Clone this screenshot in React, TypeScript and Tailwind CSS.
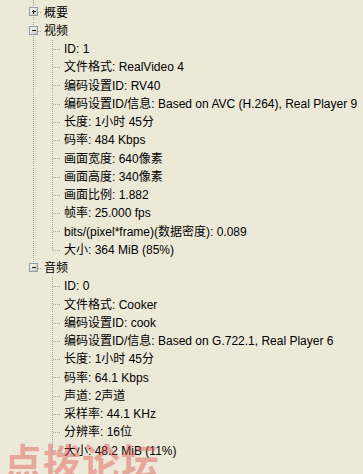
import React from 'react'

type Node = { label: string; open: boolean; children: string[] }

const ROW_H = 18.25

const tree: Node[] = [
  { label: '概要', open: false, children: [] },
  {
    label: '视频',
    open: true,
    children: [
      'ID: 1',
      '文件格式: RealVideo 4',
      '编码设置ID: RV40',
      '编码设置ID/信息: Based on AVC (H.264), Real Player 9',
      '长度: 1小时 45分',
      '码率: 484 Kbps',
      '画面宽度: 640像素',
      '画面高度: 340像素',
      '画面比例: 1.882',
      '帧率: 25.000 fps',
      'bits/(pixel*frame)(数据密度): 0.089',
      '大小: 364 MiB (85%)',
    ],
  },
  {
    label: '音频',
    open: true,
    children: [
      'ID: 0',
      '文件格式: Cooker',
      '编码设置ID: cook',
      '编码设置ID/信息: Based on G.722.1, Real Player 6',
      '长度: 1小时 45分',
      '码率: 64.1 Kbps',
      '声道: 2声道',
      '采样率: 44.1 KHz',
      '分辨率: 16位',
      '大小: 48.2 MiB (11%)',
    ],
  },
]

const DOT = '#a3a3a3'

// 展开/折叠按钮 + 根级连线
function RootConnector({ last, open }: { last: boolean; open: boolean }) {
  const mid = ROW_H / 2
  return (
    <svg width={19} height={ROW_H} className="shrink-0" shapeRendering="crispEdges">
      <line x1={9.5} y1={0} x2={9.5} y2={last ? mid : ROW_H} stroke={DOT} strokeDasharray="1 1" />
      <line x1={14} y1={mid} x2={18} y2={mid} stroke={DOT} strokeDasharray="1 1" />
      <defs>
        <linearGradient id="box" x1="0" y1="0" x2="1" y2="1">
          <stop offset="0" stopColor="#ffffff" />
          <stop offset="1" stopColor="#c8c4b4" />
        </linearGradient>
      </defs>
      <rect x={5.5} y={4.5} width={8} height={8} fill="url(#box)" stroke="#8c9cac" />
      <line x1={7.5} y1={8.5} x2={12} y2={8.5} stroke="#1a1a1a" />
      {!open && <line x1={9.5} y1={6.5} x2={9.5} y2={11} stroke="#1a1a1a" />}
    </svg>
  )
}

function PassLine({ show }: { show: boolean }) {
  return (
    <svg width={19} height={ROW_H} className="shrink-0" shapeRendering="crispEdges">
      {show && <line x1={9.5} y1={0} x2={9.5} y2={ROW_H} stroke={DOT} strokeDasharray="1 1" />}
    </svg>
  )
}

function ChildConnector({ last }: { last: boolean }) {
  const mid = Math.round(ROW_H / 2) + 0.5
  return (
    <svg width={20} height={ROW_H} className="shrink-0" shapeRendering="crispEdges">
      <line x1={9.5} y1={0} x2={9.5} y2={last ? mid : ROW_H} stroke={DOT} strokeDasharray="1 1" />
      <line x1={10} y1={mid} x2={18} y2={mid} stroke={DOT} strokeDasharray="1 1" />
    </svg>
  )
}

export default function App() {
  return (
    <div
      className="relative w-[363px] h-[474px] overflow-hidden bg-[#ece9d8] text-[12px] text-black"
      style={{ fontFamily: '"Liberation Sans", "Noto Sans CJK SC", sans-serif' }}
    >
      <div className="pl-[24px]">
        {/* 顶部延伸的根连线 */}
        <svg width={19} height={3.4} className="block" shapeRendering="crispEdges">
          <line x1={9.5} y1={0} x2={9.5} y2={4} stroke={DOT} strokeDasharray="1 1" />
        </svg>
        {tree.map((node, i) => {
          const lastRoot = i === tree.length - 1
          return (
            <div key={node.label}>
              <div className="flex items-center h-[18.25px]">
                <RootConnector last={lastRoot} open={node.open} />
                <span className="ml-[1px] whitespace-nowrap leading-none">{node.label}</span>
              </div>
              {node.open &&
                node.children.map((c, j) => (
                  <div key={c} className="flex items-center h-[18.25px]">
                    <PassLine show={!lastRoot} />
                    <ChildConnector last={j === node.children.length - 1} />
                    <span className="ml-[1px] whitespace-nowrap leading-none">{c}</span>
                  </div>
                ))}
            </div>
          )
        })}
      </div>

      {/* 水印 */}
      <div
        className="absolute left-[4px] top-[441px] text-[38px] font-bold tracking-[1px] text-[#e05050]/45 leading-none select-none pointer-events-none"
        style={{ fontFamily: '"Noto Sans CJK SC", sans-serif' }}
      >
        点拨论坛
      </div>
    </div>
  )
}
